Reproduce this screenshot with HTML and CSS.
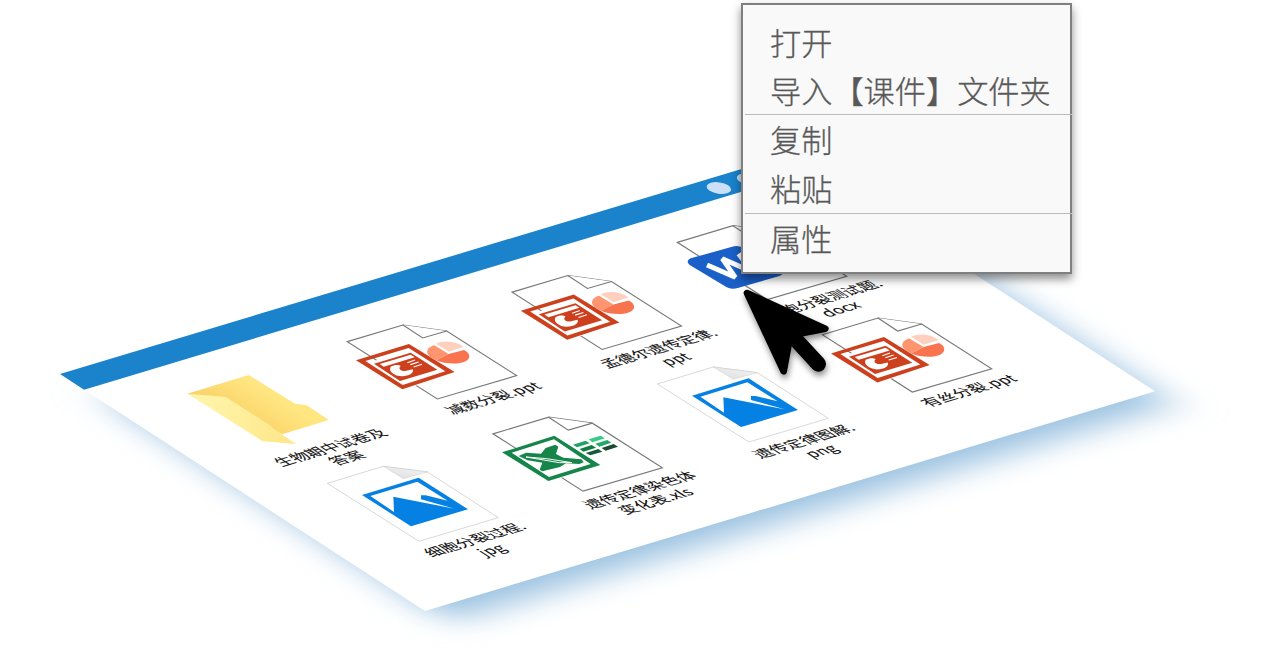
FILE: index.html
```html
<!DOCTYPE html>
<html lang="zh-CN">
<head>
<meta charset="utf-8">
<title>文件管理</title>
<link rel="stylesheet" href="styles.css">
</head>
<body>
<main class="scene">
<svg class="desk" width="1277" height="672" viewBox="0 0 1277 672">
  <defs>
    <filter id="soft" x="-20%" y="-20%" width="140%" height="140%"><feGaussianBlur stdDeviation="19"/></filter>
    <linearGradient id="back" gradientUnits="userSpaceOnUse" x1="260" y1="80" x2="190" y2="190"><stop offset="0" stop-color="#ffe680"/><stop offset="1" stop-color="#f9d067"/></linearGradient>
    <linearGradient id="front" gradientUnits="userSpaceOnUse" x1="100" y1="100" x2="300" y2="220"><stop offset="0" stop-color="#fff3a8"/><stop offset="1" stop-color="#ffe88c"/></linearGradient>
    <linearGradient id="fold" x1="0" y1="1" x2="1" y2="0"><stop offset="0" stop-color="#dcdcdc"/><stop offset="1" stop-color="#f7f7f7"/></linearGradient>
    <g id="page">
      <path d="M82 124 249 74 380 92 590 226 352 296Z"/>
      <path d="M249 74 308 113 380 92"/>
    </g>
    <g id="ppt">
      <use href="#page" class="sheet"/>
      <path fill="#fff" d="M135 190 267 150 380 208 280 260Z"/>
      <path fill="#cd401e" fill-rule="evenodd" d="M108 180 267 131 404 215 247 267ZM136 182 266 143 376 213 248 254Z"/>
      <path fill="#cd401e" d="M162 190 272 157 352 208 240 242Z"/>
      <path fill="#fff" d="M179 191 272 163 284 171 191 199Z"/>
      <path fill="#fff" d="M212 199C222 193 236 193 242 197C234 204 240 212 253 212C262 212 268 208 278 207C284 217 267 228 246 228C222 227 204 212 212 199Z"/>
      <path stroke="#fff" stroke-width="3.2" d="m262 187 23-8M271 193l25-8M281 200l25-8"/>
      <path fill="#ff956f" d="M386 161 343 135C326 139 320 150 322 158C325 168 335 175 349 180Z"/>
      <path fill="#f9734e" d="M386 161 432 149C450 158 454 173 437 183C414 194 375 191 349 180Z"/>
      <path fill="#ffd0c0" d="M348 130C370 119 408 122 431 140L387 154Z"/>
    </g>
    <g id="picture">
      <path class="thin" d="M52 102 220 51 352 68 565 205 327 276Z"/>
      <path fill="url(#fold)" stroke="#bbb" d="M220 51 280 88 352 68Z"/>
      <path fill="#0580e3" d="M156 137 326 85 474 180 303 231Z"/>
      <path fill="#fff" d="M181 140 322 97 413 154 347 138 333 138 333 150 434 178 250 142 252 188Z"/>
    </g>
  </defs>

  <g transform="matrix(.957 -.288 .839 .545 60 374)">
    <rect class="shadow" x="4" y="50" width="759" height="408"/>
    <rect width="763" height="435" fill="#fff"/>
    <rect width="763" height="28.7" fill="#1b82cc"/>
    <g fill="#c9e0f7"><circle cx="675" cy="15.5" r="9.6"/><circle cx="706.5" cy="15.5" r="9.6"/><circle cx="738" cy="15.5" r="9.6"/></g>
  </g>

  <g transform="translate(180 365) scale(.33333)">
    <path fill="url(#back)" d="M22 86 206 30 345 116 380 121 447 165 306 208 270 190Z"/>
    <path fill="url(#front)" d="M22 86 137 96 272 182 278 190 348 237 248 229Z"/>
  </g>
  <use href="#ppt" transform="translate(320 300.3) scale(.33333)"/>
  <use href="#ppt" transform="translate(484.8 250.8) scale(.33333)"/>
  <use href="#ppt" transform="translate(795 293.4) scale(.33333)"/>
  <use href="#picture" transform="translate(640 350) scale(.33333)"/>
  <use href="#picture" transform="translate(310 449.3) scale(.33333)"/>

  <g transform="translate(660 150) scale(.33333)">
    <use href="#page" class="sheet" x="-30" y="153"/>
    <path fill="#1b5fc8" d="M92 325 222 289Q235 285 249 293L362 362Q375 372 358 378L236 413Q214 420 199 411L88 344Q76 332 92 325Z"/>
    <path class="w-mark" d="M141 345 226 382 187 326 276 365 236 311"/>
  </g>

  <g transform="translate(480 400) scale(.33333)">
    <use href="#page" class="sheet" x="-43" y="-22.5"/>
    <path fill="#fff" d="M80 158 223 118 340 192 230 239Z"/>
    <path fill="#15854a" fill-rule="evenodd" d="M66 157 223 107 361 195 205 243ZM95 158 222 118 332 192 207 231Z"/>
    <path fill="#15854a" d="M116 168 138 158 183 161 197 144 226 134 235 140 228 162 250 173 304 178 311 187 298 192 258 190 240 201 187 214 179 209 187 188 143 181Z"/>
    <path stroke="#fff" stroke-width="3" d="M138 171 200 176 276 188 238 188Z" fill="none"/>
    <path fill="#22a365" d="m279 134 38-12 12 8-38 12Z"/><path fill="#33cc85" d="m326 118 36-11 13 8-38 12Z"/>
    <path fill="#107c41" d="m299 147 36-12 13 8-38 12Z"/><path fill="#22a86b" d="m346 131 36-11 12 8-36 12Z"/>
    <path fill="#185c37" d="m317 159 38-12 12 8-36 11Z"/><path fill="#1a4a30" d="m365 144 36-12 13 8-37 12Z"/>
  </g>

  <g class="labels">
    <text transform="matrix(.957 -.288 .839 .545 330.2 447.5)" dy=".37em">生物期中试卷及</text>
    <text transform="matrix(.957 -.288 .839 .545 346.5 458)" dy=".37em">答案</text>
    <text transform="matrix(.957 -.288 .839 .545 493 398)" dy=".37em">减数分裂.ppt</text>
    <text transform="matrix(.957 -.288 .839 .545 658.5 348.5)" dy=".37em">孟德尔遗传定律.</text>
    <text transform="matrix(.957 -.288 .839 .545 675.5 359)" dy=".37em">ppt</text>
    <text transform="matrix(.957 -.288 .839 .545 823.5 299)" dy=".37em">细胞分裂测试题.</text>
    <text transform="matrix(.957 -.288 .839 .545 840.5 309)" dy=".37em">docx</text>
    <text transform="matrix(.957 -.288 .839 .545 639.5 490)" dy=".37em">遗传定律染色体</text>
    <text transform="matrix(.957 -.288 .839 .545 655.5 501)" dy=".37em">变化表.xls</text>
    <text transform="matrix(.957 -.288 .839 .545 803.8 441)" dy=".37em">遗传定律图解.</text>
    <text transform="matrix(.957 -.288 .839 .545 821 451)" dy=".37em">png</text>
    <text transform="matrix(.957 -.288 .839 .545 474.8 539.5)" dy=".37em">细胞分裂过程.</text>
    <text transform="matrix(.957 -.288 .839 .545 491.5 550)" dy=".37em">jpg</text>
    <text transform="matrix(.957 -.288 .839 .545 968.7 390.5)" dy=".37em">有丝分裂.ppt</text>
  </g>
</svg>

<nav class="menu">
  <div class="group"><div class="item">打开</div><div class="item">导入【课件】文件夹</div></div>
  <div class="group"><div class="item">复制</div><div class="item">粘贴</div></div>
  <div class="group"><div class="item">属性</div></div>
</nav>

<svg class="cursor" width="110" height="110" viewBox="0 0 330 330">
  <path d="M39 51 274 158 188 175 165 200 149 286Z"/>
  <path class="tail" d="M180 185 253 264"/>
</svg>
</main>
</body>
</html>
```
FILE: styles.css
```css
body {
  margin: 0;
  background: #fff;
  font-family: "Noto Sans CJK SC", sans-serif;
}
.scene {
  position: relative;
  width: 1277px;
  height: 672px;
  overflow: hidden;
}
.desk { display: block; }
.shadow { fill: #9cc3e1; filter: url(#soft); }
.sheet { fill: #fff; stroke: #787878; stroke-width: 3.4; }
.thin { fill: #fff; stroke: #c4c4c4; stroke-width: 2; }
.w-mark { fill: none; stroke: #fff; stroke-width: 15; stroke-linejoin: bevel; }
.labels text {
  font-family: "Noto Sans CJK SC", sans-serif;
  font-size: 16px;
  fill: #111;
  stroke: #111;
  stroke-width: .1px;
  text-anchor: middle;
}
.menu {
  position: absolute;
  left: 741px;
  top: 3px;
  box-sizing: border-box;
  width: 331px;
  height: 271px;
  padding: 12px 0 0 2px;
  border: 2px solid #7f7f7f;
  background: #f9f9f9;
  box-shadow: 0 5px 9px rgba(0, 0, 0, .45);
}
.group {
  margin-right: -2px;
  border-bottom: 1px solid #bbb;
}
.group:last-child { border: 0; }
.item {
  height: 49px;
  padding-left: 25px;
  font-size: 31.2px;
  font-weight: 300;
  line-height: 50px;
  white-space: nowrap;
  color: #595959;
  -webkit-text-stroke: .3px #595959;
}
.item:first-child { height: 48px; }
.group + .group .item { height: 49px; line-height: 48px; }
.group:last-child .item { line-height: 47px; }
.cursor {
  position: absolute;
  left: 734px;
  top: 276px;
  overflow: visible;
  filter: drop-shadow(1px 4px 3px rgba(0, 0, 0, .45));
}
.cursor path {
  stroke: #000;
  stroke-width: 20;
  stroke-linejoin: round;
  stroke-linecap: round;
}
.cursor .tail { stroke-width: 46; }
```
